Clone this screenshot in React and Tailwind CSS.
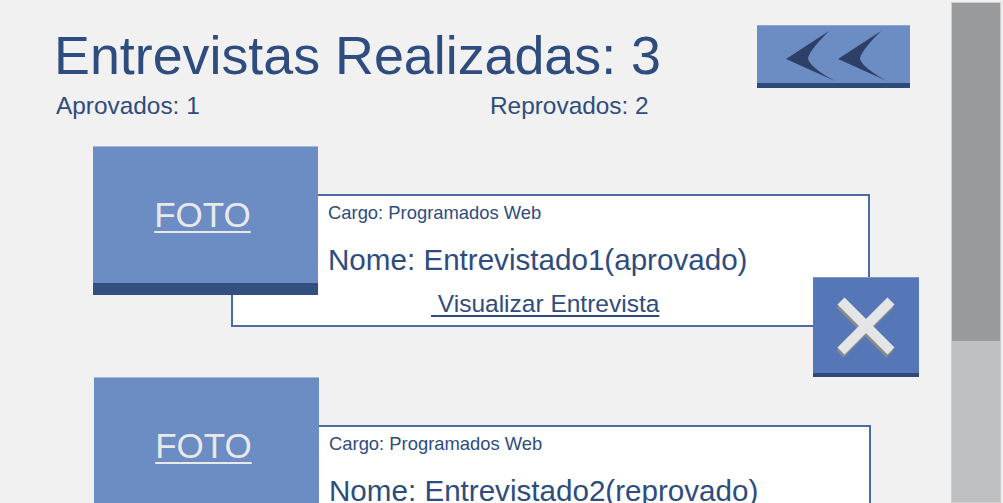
import { Fragment } from "react";

const font = { fontFamily: '"Liberation Sans", Arial, sans-serif' };

const interviews = [
  { cargo: "Programados Web", nome: "Entrevistado1(aprovado)", shift: "ml-[93px]", removable: true },
  { cargo: "Programados Web", nome: "Entrevistado2(reprovado)", shift: "ml-[94px]", removable: false },
];

function BackButton() {
  return (
    <button
      type="button"
      className="flex h-[63px] w-[153px] flex-col border-t border-[#8ea6d2] bg-[#6c8cc4]"
    >
      <svg viewBox="0 0 153 57" className="h-[57px] w-[153px]">
        <path d="M29 33 L72 5 Q51 26 51 33 Q54 42 78 55 Z" fill="#2f4068" />
        <path d="M81 33 L124 5 Q103 26 103 33 Q106 42 130 55 Z" fill="#2f4068" />
      </svg>
      <span className="h-[5px] w-full bg-[#2f4a7a]" />
    </button>
  );
}

function RemoveButton() {
  return (
    <button
      type="button"
      className="absolute left-[720px] top-[131px] flex h-[100px] w-[106px] flex-col border-t border-[#7d97c8] bg-[#5577b8]"
    >
      <svg viewBox="0 0 106 95" className="h-[95px] w-[106px]">
        <g stroke="#8a8a8a" strokeWidth="10">
          <line x1="27" y1="26" x2="77" y2="76" />
          <line x1="77" y1="26" x2="27" y2="76" />
        </g>
        <g stroke="#e4e5e7" strokeWidth="10">
          <line x1="28" y1="23" x2="78" y2="73" />
          <line x1="78" y1="23" x2="28" y2="73" />
        </g>
      </svg>
      <span className="h-[4px] w-full bg-[#2f4a7a]" />
    </button>
  );
}

function InterviewCard({ item }) {
  return (
    <div className={`relative ${item.shift} w-[826px]`}>
      <div className="ml-[138px] mt-[48px] flex h-[133px] w-[639px] flex-col overflow-hidden border-2 border-[#4a6aa8] bg-white pl-[95px] pt-[8px] text-[#2e4c7e]">
        <p className="text-[18.4px] leading-[18px]">Cargo: {item.cargo}</p>
        <p className="mt-[23px] text-[29.6px] leading-[29px]">Nome: {item.nome}</p>
        <a className="mt-[18px] ml-[103px] self-start whitespace-nowrap text-[24.5px] leading-[24px] underline underline-offset-[3px]">
          {"\u00a0"}Visualizar Entrevista
        </a>
      </div>
      <div className="absolute left-0 top-0 flex h-[149px] w-[225px] flex-col border-t border-[#a6b9dc] bg-[#6c8cc4]">
        <div className="flex flex-1 items-center justify-center pb-[2px] pr-[6px]">
          <span className="text-[35px] leading-[35px] text-[#e9e9ea] underline underline-offset-[4px] decoration-[2px]">
            FOTO
          </span>
        </div>
        <span className="h-[12px] w-full bg-[#324f80]" />
      </div>
      {item.removable && <RemoveButton />}
    </div>
  );
}

export default function App() {
  return (
    <div className="flex h-[503px] w-[1003px] overflow-hidden bg-[#f1f1f1]" style={font}>
      <main className="w-[951px] shrink-0">
        <header className="flex items-start justify-between pl-[54px] pr-[41px] pt-[25px]">
          <h1 className="mt-[3px] text-[53.8px] leading-[54px] text-[#2e4c7e]">Entrevistas Realizadas: 3</h1>
          <BackButton />
        </header>
        <div className="mt-[6px] flex pl-[56px] text-[24.4px] leading-[24px] text-[#2e4c7e]">
          <span className="w-[434px]">Aprovados: 1</span>
          <span>Reprovados: 2</span>
        </div>
        <div className="mt-[28px] flex flex-col gap-[50px]">
          {interviews.map((item, i) => (
            <Fragment key={i}>
              <InterviewCard item={item} />
            </Fragment>
          ))}
        </div>
      </main>
      <aside className="mt-[2px] flex w-[50px] shrink-0 flex-col border border-[#cfcfcf]">
        <div className="h-[338px] bg-[#999a9b]" />
        <div className="flex-1 bg-[#bfc0c2]" />
      </aside>
      <div className="flex-1 bg-[#ececec]" />
    </div>
  );
}
